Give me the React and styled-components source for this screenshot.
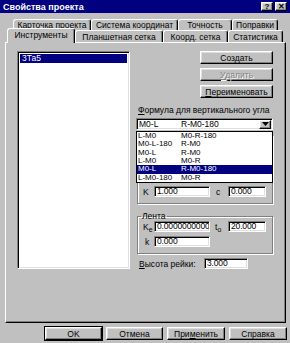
import React from 'react'
import styled, { createGlobalStyle, css } from 'styled-components'

const GlobalStyle = createGlobalStyle`
    html, body {
        margin: 0;
        padding: 0;
        background: #c0c0c0;
    }
    body {
        font-family: "Liberation Sans", Arial, sans-serif;
        font-size: 8.5px;
        color: #000;
    }
    * { box-sizing: border-box; }
`

const raised = css`
    border: 1px solid;
    border-color: #fff #000 #000 #fff;
    box-shadow: inset -1px -1px #808080, inset 1px 1px #dfdfdf;
`

const sunken = css`
    border: 1px solid;
    border-color: #808080 #fff #fff #808080;
    box-shadow: inset 1px 1px #000, inset -1px -1px #dfdfdf;
`

const Window = styled.div`
    width: 290px;
    height: 343px;
    background: #c0c0c0;
    display: flex;
    flex-direction: column;
    overflow: hidden;
`

const TitleBar = styled.div`
    height: 13px;
    background: #000080;
    color: #fff;
    font-weight: bold;
    font-size: 9px;
    display: flex;
    align-items: center;
    padding: 0 3px;
    gap: 2px;
`

const Title = styled.span`
    flex: 1;
`

const TitleButton = styled.div`
    width: 12px;
    height: 9px;
    background: #c0c0c0;
    ${raised};
    color: #000;
    font-size: 8px;
    font-weight: bold;
    line-height: 1;
    display: flex;
    align-items: center;
    justify-content: center;
`

const TabRow = styled.div`
    display: flex;
    align-items: flex-end;
    height: ${p => p.h}px;
    padding-left: ${p => p.left}px;
    position: relative;
    z-index: ${p => p.z || 0};
`

const Tab = styled.div`
    width: ${p => p.w}px;
    height: ${p => p.h}px;
    border-top: 1px solid #fff;
    border-left: 1px solid #fff;
    border-right: 1px solid #000;
    box-shadow: inset -1px 0 #808080;
    border-radius: 3px 3px 0 0;
    background: #c0c0c0;
    display: flex;
    align-items: center;
    justify-content: center;
    white-space: nowrap;
    ${p => p.active && css`
        height: ${p.h + 3}px;
        margin-bottom: -1px;
        position: relative;
        z-index: 2;
        padding-bottom: 2px;
    `}
`

const Panel = styled.div`
    margin-left: 5px;
    width: 281px;
    height: 281px;
    background: #c0c0c0;
    ${raised};
    box-shadow: inset -1px -1px #808080;
    display: flex;
    padding: 8px 0 0 11px;
    position: relative;
    z-index: 1;
`

const ListBox = styled.div`
    width: 113px;
    height: 218px;
    background: #fff;
    ${sunken};
    padding: 2px;
`

const ListItem = styled.div`
    height: 9px;
    line-height: 9px;
    padding-left: 2px;
    background: ${p => (p.selected ? '#000080' : 'transparent')};
    color: ${p => (p.selected ? '#fff' : '#000')};
`

const RightColumn = styled.div`
    margin-left: 6px;
    width: 137px;
    display: flex;
    flex-direction: column;
    position: relative;
`

const Button = styled.div`
    width: ${p => p.w}px;
    height: 13px;
    background: #c0c0c0;
    ${raised};
    display: flex;
    align-items: center;
    justify-content: center;
    white-space: nowrap;
    margin-top: ${p => p.mt || 0}px;
    align-self: ${p => p.align || 'auto'};
    color: ${p => (p.disabled ? '#808080' : '#000')};
    text-shadow: ${p => (p.disabled ? '1px 1px #fff' : 'none')};
    ${p => p.isDefault && css`
        outline: 1px solid #000;
    `}
`

const Caption = styled.div`
    height: 10px;
    line-height: 10px;
    margin-top: ${p => p.mt || 0}px;
    padding-left: 2px;
    white-space: nowrap;
`

const Combo = styled.div`
    margin-top: 3px;
    height: 12px;
    background: #fff;
    ${sunken};
    display: flex;
    align-items: center;
    padding: 0 1px 0 2px;
`

const Cell = styled.span`
    width: ${p => p.w}px;
    white-space: nowrap;
`

const DropButton = styled.div`
    margin-left: auto;
    width: 12px;
    height: 9px;
    background: #c0c0c0;
    ${raised};
    display: flex;
    align-items: center;
    justify-content: center;
`

const DropList = styled.div`
    position: absolute;
    top: 80px;
    left: 0;
    width: 137px;
    height: 52px;
    background: #fff;
    border: 1px solid #000;
    z-index: 5;
    display: flex;
    flex-direction: column;
    font-size: 8px;
`

const DropRow = styled.div`
    flex: 1 1 0;
    min-height: 0;
    line-height: 8px;
    display: flex;
    align-items: center;
    padding-left: 1px;
    background: ${p => (p.selected ? '#000080' : 'transparent')};
    color: ${p => (p.selected ? '#fff' : '#000')};
`

const Group = styled.fieldset`
    margin: ${p => p.mt || 0}px 0 0 1px;
    width: 136px;
    height: ${p => p.h}px;
    border: 1px solid #808080;
    box-shadow: 1px 1px #fff, inset 1px 1px #fff;
    padding: ${p => p.pad};
    min-width: 0;
`

const Legend = styled.legend`
    padding: 0 1px;
    margin-left: 3px;
    line-height: 8px;
`

const FieldRow = styled.div`
    display: flex;
    align-items: center;
    height: 11px;
    margin-top: ${p => p.mt || 0}px;
`

const FieldLabel = styled.span`
    width: ${p => p.w}px;
    padding-left: ${p => p.pl || 0}px;
    white-space: nowrap;
    sub {
        font-size: 7px;
        vertical-align: -2px;
        line-height: 0;
    }
`

const Input = styled.div`
    width: ${p => p.w}px;
    height: 11px;
    background: #fff;
    ${sunken};
    padding-left: 2px;
    line-height: 9px;
    letter-spacing: -0.15px;
    white-space: nowrap;
    overflow: hidden;
`

const Footer = styled.div`
    display: flex;
    gap: 4px;
    padding-left: 45px;
    margin-top: 4px;
`

const formulas = [
    ['L-M0', 'M0-R-180'],
    ['M0-L-180', 'R-M0'],
    ['M0-L', 'R-M0'],
    ['L-M0', 'M0-R'],
    ['M0-L', 'R-M0-180', true],
    ['L-M0-180', 'M0-R'],
]

const App = () => {
    return (
        <>
            <GlobalStyle />
            <Window>
                <TitleBar>
                    <Title>Свойства проекта</Title>
                    <TitleButton>?</TitleButton>
                    <TitleButton>✕</TitleButton>
                </TitleBar>

                <TabRow h={17} left={13}>
                    <Tab w={78} h={11}>Карточка проекта</Tab>
                    <Tab w={87} h={11}>Система координат</Tab>
                    <Tab w={54} h={11}>Точность</Tab>
                    <Tab w={46} h={11}>Поправки</Tab>
                </TabRow>
                <TabRow h={12} left={7} z={2}>
                    <Tab w={68} h={12} active>Инструменты</Tab>
                    <Tab w={88} h={12}>Планшетная сетка</Tab>
                    <Tab w={65} h={12}>Коорд. сетка</Tab>
                    <Tab w={55} h={12}>Статистика</Tab>
                </TabRow>

                <Panel>
                    <ListBox>
                        <ListItem selected>3Та5</ListItem>
                    </ListBox>

                    <RightColumn>
                        <Button w={73} align="flex-end">Создать</Button>
                        <Button w={73} align="flex-end" mt={4} disabled><u>У</u>далить</Button>
                        <Button w={73} align="flex-end" mt={4}><u>П</u>ереименовать</Button>

                        <Caption mt={7}><u>Ф</u>ормула для вертикального угла</Caption>
                        <Combo>
                            <Cell w={42}>M0-L</Cell>
                            <Cell w={60}>R-M0-180</Cell>
                            <DropButton>
                                <svg width="7" height="4" viewBox="0 0 7 4">
                                    <path d="M0 0h7L3.5 4z" fill="#000" />
                                </svg>
                            </DropButton>
                        </Combo>
                        <DropList>
                            {formulas.map(([a, b, sel], i) => (
                                <DropRow key={i} selected={sel}>
                                    <Cell w={43}>{a}</Cell>
                                    <Cell w={60}>{b}</Cell>
                                </DropRow>
                            ))}
                        </DropList>

                        <Group mt={5} h={69} pad="50px 0 0 0">
                            <FieldRow>
                                <FieldLabel w={16} pl={5}>K</FieldLabel>
                                <Input w={56}>1.000</Input>
                                <FieldLabel w={18} pl={6}>c</FieldLabel>
                                <Input w={38}>0.000</Input>
                            </FieldRow>
                        </Group>

                        <Group mt={8} h={42} pad="0">
                            <Legend>Лента</Legend>
                            <FieldRow mt={1}>
                                <FieldLabel w={16} pl={5}>K<sub>e</sub></FieldLabel>
                                <Input w={56}>0.0000000000</Input>
                                <FieldLabel w={18} pl={5}>t<sub>o</sub></FieldLabel>
                                <Input w={38}>20.000</Input>
                            </FieldRow>
                            <FieldRow mt={4}>
                                <FieldLabel w={16} pl={7}>k</FieldLabel>
                                <Input w={56}>0.000</Input>
                            </FieldRow>
                        </Group>

                        <FieldRow mt={4}>
                            <FieldLabel w={68} pl={3}><u>В</u>ысота рейки:</FieldLabel>
                            <Input w={44}>3.000</Input>
                        </FieldRow>
                    </RightColumn>
                </Panel>

                <Footer>
                    <Button w={57} isDefault>OK</Button>
                    <Button w={57}>Отмена</Button>
                    <Button w={58}>При<u>м</u>енить</Button>
                    <Button w={58}>Справка</Button>
                </Footer>
            </Window>
        </>
    )
}

export default App
